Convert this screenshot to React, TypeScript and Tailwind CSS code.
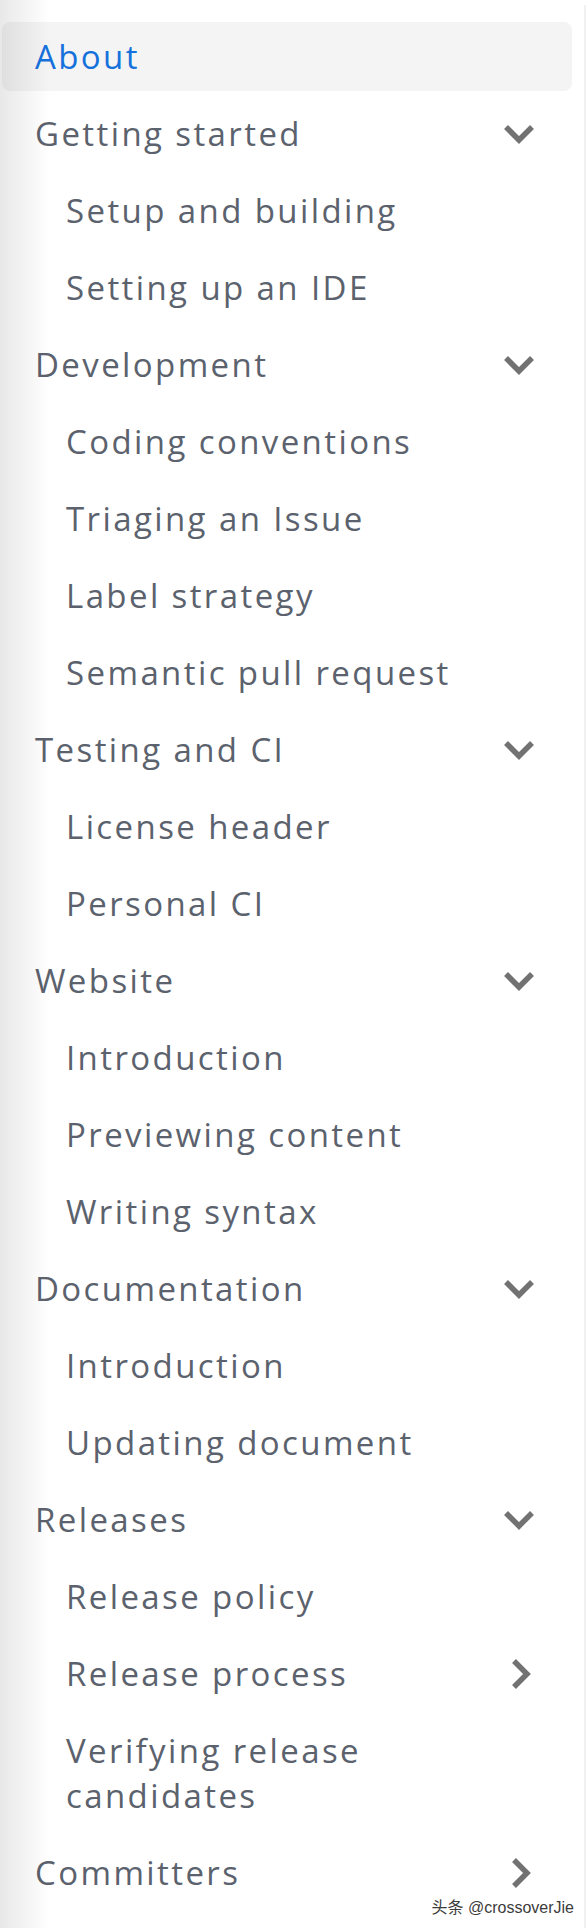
import React from 'react';

type Item = { label: string; level: 0 | 1; caret?: 'down' | 'right'; active?: boolean };

const items: Item[] = [
  { label: 'About', level: 0, active: true },
  { label: 'Getting started', level: 0, caret: 'down' },
  { label: 'Setup and building', level: 1 },
  { label: 'Setting up an IDE', level: 1 },
  { label: 'Development', level: 0, caret: 'down' },
  { label: 'Coding conventions', level: 1 },
  { label: 'Triaging an Issue', level: 1 },
  { label: 'Label strategy', level: 1 },
  { label: 'Semantic pull request', level: 1 },
  { label: 'Testing and CI', level: 0, caret: 'down' },
  { label: 'License header', level: 1 },
  { label: 'Personal CI', level: 1 },
  { label: 'Website', level: 0, caret: 'down' },
  { label: 'Introduction', level: 1 },
  { label: 'Previewing content', level: 1 },
  { label: 'Writing syntax', level: 1 },
  { label: 'Documentation', level: 0, caret: 'down' },
  { label: 'Introduction', level: 1 },
  { label: 'Updating document', level: 1 },
  { label: 'Releases', level: 0, caret: 'down' },
  { label: 'Release policy', level: 1 },
  { label: 'Release process', level: 1, caret: 'right' },
  { label: 'Verifying release candidates', level: 1 },
  { label: 'Committers', level: 0, caret: 'right' },
];

function Caret({ dir }: { dir: 'down' | 'right' }) {
  if (dir === 'down') {
    return (
      <svg width="34" height="22" viewBox="0 0 34 22" className="shrink-0">
        <polyline points="4,4 17,17 30,4" fill="none" stroke="#727272" strokeWidth="5.5" />
      </svg>
    );
  }
  return (
    <svg width="22" height="34" viewBox="0 0 22 34" className="shrink-0 mr-[5px]">
      <polyline points="5,4 18,17 5,30" fill="none" stroke="#727272" strokeWidth="5.5" />
    </svg>
  );
}

export default function App() {
  return (
    <div
      className="relative w-[588px] h-[1928px] bg-white overflow-hidden"
      style={{ fontFamily: '"Open Sans", "Noto Sans", sans-serif' }}
    >
      <div className="flex h-full">
        <nav className="flex-1 pl-[2px] pr-[12px] pt-[22px]">
          <ul className="flex flex-col gap-[8px]">
            {items.map((item, i) => (
              <li key={i}>
                <div
                  className={`flex items-center justify-between rounded-lg py-[12px] pr-[36px] ${
                    item.level === 0 ? 'pl-[33px]' : 'pl-[64px]'
                  } ${item.active ? 'bg-[#f4f4f4]' : ''}`}
                >
                  <span
                    className={`text-[33px] leading-[45px] tracking-[2.4px] ${
                      item.active ? 'text-[#1471dc]' : 'text-[#5b626d]'
                    } ${item.label.length > 24 ? 'max-w-[310px]' : ''}`}
                  >
                    {item.label}
                  </span>
                  {item.caret && <Caret dir={item.caret} />}
                </div>
              </li>
            ))}
          </ul>
        </nav>
        <div className="w-[2px] mt-[5px] mr-[2px] bg-[#f1f1f1]" />
      </div>

      {/* drawer edge shadow */}
      <div className="pointer-events-none absolute inset-y-0 left-0 w-[50px] bg-gradient-to-r from-black/[0.09] to-transparent" />

      {/* watermark */}
      <div
        className="absolute right-[14px] bottom-[12px] text-[16px] leading-none text-[#3c3c3c]"
        style={{ fontFamily: '"Liberation Sans", "Noto Sans CJK SC", sans-serif', textShadow: '0 0 2px #fff' }}
      >
        头条 @crossoverJie
      </div>
    </div>
  );
}
